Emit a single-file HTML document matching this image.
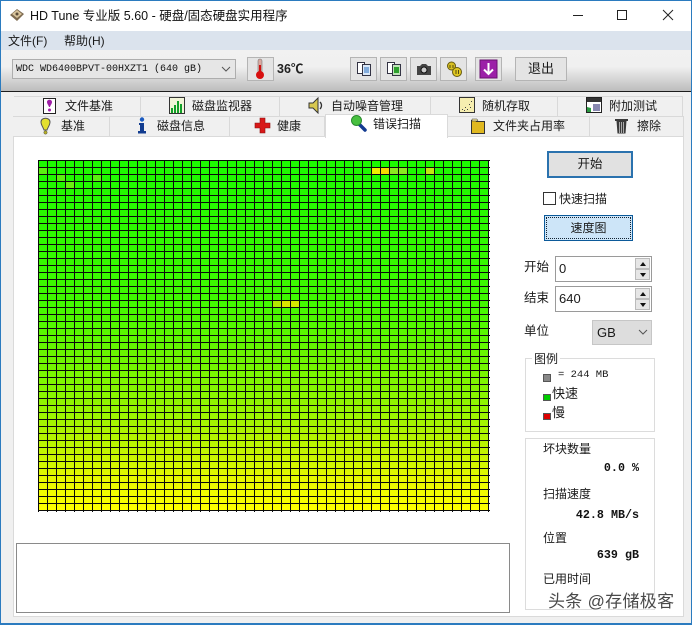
<!DOCTYPE html>
<html><head><meta charset="utf-8"><style>
*{box-sizing:border-box}
html,body{margin:0;padding:0}
body{width:692px;height:625px;position:relative;overflow:hidden;background:#f0f0f0;font-family:"Liberation Sans","Noto Sans CJK SC",sans-serif;font-size:12px;color:#1a1a1a}
.a{position:absolute}
.t{position:absolute;white-space:nowrap;line-height:16px}
.m{font-family:"Liberation Mono","Noto Sans CJK SC",monospace}
.tb{position:absolute;top:57px;height:24px;background:#e4e4e4;border:1px solid #b4b4b4}
.tab{position:absolute;height:20px;border-right:1px solid #d9d9d9;border-top:1px solid #d9d9d9;background:#f0f0f0}
.val{position:absolute;right:53px;font-family:"Liberation Mono",monospace;font-weight:bold;font-size:11.7px;line-height:14px;white-space:pre;color:#111}
.spin{position:absolute;left:555px;width:97px;height:26px;background:#fff;border:1px solid #9a9a9a;font-size:13px;line-height:24px;padding-left:3px}
.spin i{position:absolute;right:1px;width:15px;height:11px;background:#e6e6e6;border:1px solid #bbb}
.spin i:after{content:"";position:absolute;left:4px;top:3px;border-left:3px solid transparent;border-right:3px solid transparent}
.spin .u{top:1px}.spin .u:after{border-bottom:4px solid #111}
.spin .d{bottom:1px}.spin .d:after{border-top:4px solid #111}
.box{position:absolute;border:1px solid #dcdcdc}
.sq{position:absolute;left:543px;width:8px;height:7px;border:1px solid #555}
</style></head><body>
<!-- title -->
<div class="a" style="left:0;top:0;width:692px;height:31px;background:#fff"></div>
<svg class="a" style="left:9px;top:7px" width="16" height="16" viewBox="0 0 16 16"><path d="M1 8 8 2l7 5-7 7z" fill="#7d6a50"/><path d="M3 7 8 3l5 4-5 4z" fill="#d8c49c"/><circle cx="8" cy="7" r="1.500" fill="#5a4a38"/></svg>
<div class="t" style="left:30px;top:8px;font-size:12.500px;color:#111">HD Tune 专业版 5.60 - 硬盘/固态硬盘实用程序</div>
<svg class="a" style="left:570px;top:5px" width="110" height="20" viewBox="0 0 110 20" fill="none" stroke="#222"><path d="M3 10.500h10"/><path d="M47.500 5.500h9v9h-9z"/><path d="M93 5l10 10M103 5 93 15"/></svg>
<!-- menu -->
<div class="a" style="left:0;top:31px;width:692px;height:19px;background:#dbe3ed"></div>
<div class="t" style="left:8px;top:33px">文件(F)</div>
<div class="t" style="left:64px;top:33px">帮助(H)</div>
<!-- toolbar -->
<div class="a" style="left:0;top:50px;width:692px;height:41px;background:linear-gradient(#f1f1f1,#f0f0f0 40%,#bdbdbd)"></div>
<div class="a" style="left:0;top:91px;width:692px;height:1px;background:#1c1c1c"></div>
<div class="a" style="left:12px;top:59px;width:224px;height:20px;background:#e6e6e6;border:1px solid #adadad"></div>
<div class="t m" style="left:16px;top:62px;font-size:10px;color:#111">WDC WD6400BPVT-00HXZT1 (640 gB)</div>
<svg class="a" style="left:221px;top:66px" width="10" height="7" fill="none" stroke="#555"><path d="M1 1l4 4 4-4"/></svg>
<div class="tb" style="left:247px;width:27px"></div>
<svg class="a" style="left:253px;top:58px" width="14" height="22" viewBox="0 0 14 22"><rect x="5" y="1" width="4" height="14" rx="2" fill="#d9a9a0" stroke="#777" stroke-width=".6"/><rect x="6" y="7" width="2" height="9" fill="#d01010"/><circle cx="7" cy="17" r="4" fill="#d81010"/></svg>
<div class="t" style="left:277px;top:61px;font-weight:bold;font-size:12.500px;color:#222">36℃</div>
<div class="tb" style="left:350px;width:27px"></div>
<div class="tb" style="left:380px;width:27px"></div>
<div class="tb" style="left:410px;width:27px"></div>
<div class="tb" style="left:440px;width:27px"></div>
<div class="tb" style="left:475px;width:27px"></div>
<div class="tb t" style="left:515px;width:52px;text-align:center;line-height:22px;font-size:13px">退出</div>
<svg class="a" style="left:356px;top:61px" width="16" height="16"><path d="M1.500 1.500h7v11h-7z" fill="#fff" stroke="#334"/><path d="M6.500 3.500h8v11h-8z" fill="#dbe8f8" stroke="#334"/><path d="M8 7h5M8 9h5M8 11h5" stroke="#2a6fc0"/></svg>
<svg class="a" style="left:386px;top:61px" width="16" height="16"><path d="M1.500 1.500h7v11h-7z" fill="#fff" stroke="#334"/><path d="M6.500 3.500h8v11h-8z" fill="#bfe3b8" stroke="#334"/><path d="M8 6h5v6H8z" fill="#2da02d"/></svg>
<svg class="a" style="left:416px;top:61px" width="16" height="16"><path d="M1 5h3l2-2h4l2 2h3v9H1z" fill="#444"/><circle cx="8" cy="9" r="3" fill="#ccc" stroke="#111"/></svg>
<svg class="a" style="left:446px;top:60px" width="17" height="18"><circle cx="5.500" cy="6" r="4" fill="#d8c020" stroke="#665a10"/><circle cx="11" cy="12" r="4.500" fill="#e0c820" stroke="#665a10"/><path d="M4 5v3M7 5v3M10 10v4M12.500 10v4" stroke="#554a10"/></svg>
<svg class="a" style="left:479px;top:59px" width="19" height="20"><rect x="1" y="1" width="17" height="18" fill="#9c1fa8" stroke="#6a1070"/><path d="M9.500 4v11M5 10.500l4.500 4.500 4.500-4.500" fill="none" stroke="#fff" stroke-width="2"/></svg>
<!-- tabs -->
<div class="tab" style="left:14px;top:96px;width:127px"></div>
<div class="tab" style="left:141px;top:96px;width:139px"></div>
<div class="tab" style="left:280px;top:96px;width:151px"></div>
<div class="tab" style="left:431px;top:96px;width:127px"></div>
<div class="tab" style="left:558px;top:96px;width:125px"></div>
<div class="tab" style="left:13px;top:116px;width:97px"></div>
<div class="tab" style="left:110px;top:116px;width:120px"></div>
<div class="tab" style="left:230px;top:116px;width:95px"></div>
<div class="tab" style="left:448px;top:116px;width:142px"></div>
<div class="tab" style="left:590px;top:116px;width:94px"></div>
<!-- panel -->
<div class="a" style="left:13px;top:136px;width:671px;height:481px;background:#fff;border:1px solid #dadada"></div>
<div class="a" style="left:325px;top:114px;width:123px;height:24px;background:#fff;border:1px solid #dadada;border-bottom:0"></div>
<div class="t" style="left:65px;top:98px">文件基准</div>
<div class="t" style="left:192px;top:98px">磁盘监视器</div>
<div class="t" style="left:331px;top:98px">自动噪音管理</div>
<div class="t" style="left:482px;top:98px">随机存取</div>
<div class="t" style="left:609px;top:98px">附加测试</div>
<div class="t" style="left:61px;top:118px">基准</div>
<div class="t" style="left:157px;top:118px">磁盘信息</div>
<div class="t" style="left:277px;top:118px">健康</div>
<div class="t" style="left:373px;top:116px">错误扫描</div>
<div class="t" style="left:493px;top:118px">文件夹占用率</div>
<div class="t" style="left:637px;top:118px">擦除</div>
<!-- tab icons -->
<svg class="a" style="left:41px;top:97px" width="17" height="18"><path d="M2.500 1.500h12v15h-12z" fill="#fff" stroke="#222"/><path d="M6 5c0-3 5-3 5 0 0 2-1.500 3-2 5H8C7.500 8 6 7 6 5z" fill="#a020a8"/><circle cx="8.500" cy="13" r="1.500" fill="#a020a8"/></svg>
<svg class="a" style="left:169px;top:97px" width="16" height="17"><rect x=".5" y=".5" width="15" height="16" fill="#f2f5d8" stroke="#333"/><path d="M2 16v-5h2v5zM5 16V8h2v8zM8 16V4h2v12zM11 16V7h2v9z" fill="#12a028"/></svg>
<svg class="a" style="left:308px;top:97px" width="17" height="17"><path d="M1 6h4l5-5v15l-5-5H1z" fill="#d8c850" stroke="#333"/><path d="M12 5c2 2 2 5 0 7" fill="none" stroke="#333" stroke-width="1.300"/></svg>
<svg class="a" style="left:459px;top:97px" width="16" height="16"><rect x=".5" y=".5" width="15" height="15" fill="#f6eeb0" stroke="#333"/><path d="M3 12h1v1H3zM6 10h1v1H6zM8 12h1v1H8zM10 7h1v1h-1zM12 4h1v1h-1zM11 10h1v1h-1zM5 13h1v1H5z" fill="#444"/></svg>
<svg class="a" style="left:586px;top:97px" width="16" height="16"><rect x=".5" y=".5" width="15" height="15" fill="#fff" stroke="#222"/><rect x="1" y="1" width="14" height="4" fill="#333"/><path d="M1 15v-5l4 1v4z" fill="#2a9a40"/><rect x="7" y="7" width="7" height="7" fill="#8888b0"/></svg>
<svg class="a" style="left:39px;top:117px" width="13" height="18"><path d="M2 5c0-5 9-5 9 0 0 3-2 5-3 8H5C4 10 2 8 2 5z" fill="#e4e030" stroke="#555"/><circle cx="6.500" cy="15.500" r="1.700" fill="#b8b020" stroke="#555" stroke-width=".5"/></svg>
<svg class="a" style="left:137px;top:117px" width="10" height="17"><circle cx="5" cy="2.500" r="2.200" fill="#1a5ac0"/><path d="M2 6h5v8h2v2.500H1V14h2V8H2z" fill="#123c90"/></svg>
<svg class="a" style="left:254px;top:117px" width="17" height="17"><path d="M6 1h5v5h5v5h-5v5H6v-5H1V6h5z" fill="#d81818" stroke="#8a1010" stroke-width=".6"/></svg>
<svg class="a" style="left:350px;top:114px" width="17" height="18"><path d="M9 10l6 6" stroke="#123a90" stroke-width="3.500" stroke-linecap="round"/><circle cx="6.500" cy="6.500" r="5" fill="#48c040" stroke="#2a8a30"/></svg>
<svg class="a" style="left:470px;top:117px" width="16" height="17"><path d="M1.500 3.500h4l1 1h8v12h-13z" fill="#e0b820" stroke="#333"/><path d="M2 2h5l1 2H2z" fill="#f5e8a0" stroke="#333" stroke-width=".5"/></svg>
<svg class="a" style="left:614px;top:117px" width="15" height="17"><path d="M1 2h13v2H1zM2.500 4h10l-1 12.500h-8z" fill="#3a3a3a"/><path d="M5.500 5v11M7.500 5v11M9.500 5v11" stroke="#aaa"/></svg>
<!-- grid -->
<svg class="a" style="left:38px;top:160px" width="452" height="352" viewBox="0 0 452 352">
<defs>
<linearGradient id="g" x1="0" y1="0" x2="0" y2="1">
<stop offset="0" stop-color="#1cf800"/><stop offset=".4" stop-color="#40f800"/><stop offset=".69" stop-color="#8ef400"/><stop offset=".83" stop-color="#c0f400"/><stop offset=".92" stop-color="#e8fa00"/><stop offset="1" stop-color="#ffff00"/>
</linearGradient>
<pattern id="p" width="9" height="7" patternUnits="userSpaceOnUse"><path d="M0 .5h9M.5 0v7" stroke="#0a0a0a" stroke-width="1" fill="none" shape-rendering="crispEdges"/></pattern>
</defs>
<rect x="0" y="0" width="450" height="350" fill="url(#g)"/>
<g shape-rendering="crispEdges">
<rect x="333" y="7" width="9" height="7" fill="#eef000"/><rect x="342" y="7" width="9" height="7" fill="#f8d800"/><rect x="351" y="7" width="18" height="7" fill="#8ce820"/><rect x="387" y="7" width="9" height="7" fill="#c0e810"/>
<rect x="234" y="140" width="9" height="7" fill="#b4e800"/><rect x="243" y="140" width="9" height="7" fill="#dce400"/><rect x="252" y="140" width="9" height="7" fill="#d4e800"/>
<rect x="27" y="21" width="9" height="7" fill="#6aef10"/><rect x="54" y="14" width="9" height="7" fill="#5cef10"/><rect x="0" y="7" width="9" height="7" fill="#5cef10"/><rect x="18" y="14" width="9" height="7" fill="#5cef10"/>
</g>
<rect x="0" y="0" width="452" height="352" fill="url(#p)"/>
<path d="M450.500 0v351M0 350.500h451" stroke="#0a0a0a" stroke-width="1" fill="none" shape-rendering="crispEdges"/>
</svg>
<!-- log box -->
<div class="a" style="left:16px;top:543px;width:494px;height:70px;border:1px solid #8a8a8a;border-width:1.500px"></div>
<!-- right controls -->
<div class="a t" style="left:547px;top:151px;width:86px;height:27px;background:#e1e1e1;border:2px solid #2a72ae;text-align:center;line-height:23px;font-size:12.500px">开始</div>
<div class="a" style="left:543px;top:192px;width:13px;height:13px;background:#fff;border:1px solid #333"></div>
<div class="t" style="left:559px;top:191px">快速扫描</div>
<div class="a t" style="left:544px;top:215px;width:89px;height:26px;background:#cde5f8;border:1px solid #0c5a9a;text-align:center;line-height:24px;outline:1px dotted #123;outline-offset:-3px">速度图</div>
<div class="t" style="left:524px;top:259px;font-size:12.500px">开始</div>
<div class="t" style="left:524px;top:290px;font-size:12.500px">结束</div>
<div class="t" style="left:524px;top:323px;font-size:12.500px">单位</div>
<div class="spin" style="top:256px">0<i class="u"></i><i class="d"></i></div>
<div class="spin" style="top:286px">640<i class="u"></i><i class="d"></i></div>
<div class="a t" style="left:592px;top:320px;width:60px;height:25px;background:#dddddd;border:1px solid #c6c6c6;line-height:24px;padding-left:4px;font-size:13px">GB</div>
<svg class="a" style="left:638px;top:329px" width="10" height="7" fill="none" stroke="#555"><path d="M1 1l4 4 4-4"/></svg>
<!-- legend -->
<div class="box" style="left:525px;top:358px;width:130px;height:74px"></div>
<div class="t" style="left:532px;top:351px;background:#fff;padding:0 2px">图例</div>
<div class="sq" style="top:374px;height:8px;background:#888"></div>
<div class="t m" style="left:558px;top:367px;font-size:10.500px">= 244 MB</div>
<div class="sq" style="top:394px;background:#0c0"></div>
<div class="t" style="left:552px;top:386px;font-size:13px">快速</div>
<div class="sq" style="top:413px;background:#d00"></div>
<div class="t" style="left:552px;top:405px;font-size:13px">慢</div>
<!-- stats -->
<div class="box" style="left:525px;top:438px;width:130px;height:172px"></div>
<div class="t" style="left:543px;top:441px">坏块数量</div>
<div class="val" style="top:461px">0.0 %</div>
<div class="t" style="left:543px;top:486px">扫描速度</div>
<div class="val" style="top:508px">42.8 MB/s</div>
<div class="t" style="left:543px;top:530px">位置</div>
<div class="val" style="top:548px">639 gB</div>
<div class="t" style="left:543px;top:571px">已用时间</div>
<!-- watermark -->
<div class="t" style="left:548px;top:594px;font-size:17px;color:#4a4a4a;letter-spacing:.3px;text-shadow:0 0 2px #fff,1px 1px 1px #fff,-1px -1px 1px #fff">头条 @存储极客</div>
<!-- window border -->
<div class="a" style="left:0;top:0;width:692px;height:625px;border:1px solid #2b7bbf;border-bottom:2px solid #2b7bbf"></div>
</body></html>
